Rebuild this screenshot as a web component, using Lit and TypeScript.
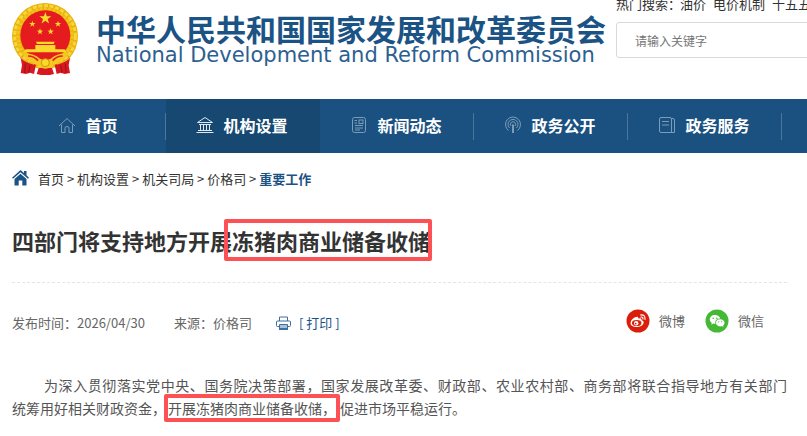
import { LitElement, html, css, svg } from "lit";
import { customElement } from "lit/decorators.js";

const STAR = "M0 -10 L2.3 -3.2 L9.5 -3.1 L3.7 1.2 L5.9 8.1 L0 3.9 L-5.9 8.1 L-3.7 1.2 L-9.5 -3.1 L-2.3 -3.2Z";

const NAV = [
  {
    label: "首页",
    icon: svg`<path d="M1 10 L9 2.5 L17 10 M3.5 8.5 V16.5 H7 V12 Q7 10.5 9 10.5 Q11 10.5 11 12 V16.5 H14.5 V8.5"/>`,
  },
  {
    label: "机构设置",
    active: true,
    icon: svg`<path d="M1.5 6.5 L9 1.5 L16.5 6.5Z M3 8.5 H15 M4.5 8.5 V14 M7.5 8.5 V14 M10.5 8.5 V14 M13.5 8.5 V14 M2 14.5 H16 M0.5 16.5 H17.5"/>`,
  },
  {
    label: "新闻动态",
    icon: svg`<rect x="2.5" y="1.5" width="13" height="15" rx="2"/><path d="M4.5 4.5 H7 M4.5 7 H7 M5 9.5 H13 M5 12 H13 M5 14 H10"/><rect x="9" y="4" width="4" height="3.5"/>`,
  },
  {
    label: "政务公开",
    icon: svg`<path d="M4.5 14.5 A7.5 7.5 0 1 1 13.5 14.5 M5.5 12 A5 5 0 1 1 12.5 12 M7 10 A2.6 2.6 0 1 1 11 10"/><path d="M9 8.5 V17" stroke-width="2"/>`,
  },
  {
    label: "政务服务",
    icon: svg`<path d="M3 1.5 H12 Q13.5 1.5 13.5 3 V16.5 H3 Q1.5 16.5 1.5 15 V3 Q1.5 1.5 3 1.5Z M4 5.5 H11 M4 9 H11 M13.5 2.5 H15 Q16.5 2.5 16.5 4 V16.5 H13"/>`,
  },
];

@customElement("site-emblem")
class SiteEmblem extends LitElement {
  static styles = css`
    :host { display: block; flex: none; }
    .emblem { display: block; width: 66px; height: 72px; }
  `;
  render() {
    return html`<svg class="emblem" viewBox="12 9 198 216" role="img" aria-label="国徽">
      <circle cx="111" cy="108" r="99" fill="#e9b10c"/>
      <circle cx="111" cy="108" r="91" fill="none" stroke="#f7d63a" stroke-width="9" stroke-dasharray="12 5"/>
      <circle cx="111" cy="108" r="81" fill="none" stroke="#f3c51c" stroke-width="9" stroke-dasharray="9 4"/>
      <circle cx="112" cy="106" r="75" fill="#e51b1f"/>
      <g fill="#fbd92b">
        <path d=${STAR} transform="translate(112 55) scale(1.9)"/>
        <path d=${STAR} transform="translate(73 72) scale(1)"/>
        <path d=${STAR} transform="translate(150 72) scale(1)"/>
        <path d=${STAR} transform="translate(96 95) scale(1)"/>
        <path d=${STAR} transform="translate(128 95) scale(1)"/>
        <path d="M84 125 H140 L137 132 H87Z M82 135 H142 V148 H170 L176 157 H47 L53 148 H82Z"/>
      </g>
      <path d="M37 168 Q50 186 84 194 L78 222 L66 218 L54 222 L38 219 L42 196Z M187 168 Q173 186 140 194 L146 222 L158 218 L170 222 L186 219 L182 196Z" fill="#d7181f"/>
      <path d="M92 204 H132 L138 222 Q112 230 86 222Z" fill="#d7181f"/>
      <path d="M52 190 L50 219 M66 196 L62 218 M172 190 L174 219 M158 196 L162 218" stroke="#9d1018" stroke-width="3" fill="none"/>
      <path d="M45 160 Q78 160 96 176 Q112 184 128 176 Q146 160 179 160 Q172 188 140 190 Q128 206 112 206 Q96 206 84 190 Q52 188 45 160Z" fill="#f5c722"/>
      <path d="M60 168 Q78 168 90 182 M164 168 Q146 168 134 182" stroke="#e51b1f" stroke-width="5" fill="none"/>
      <circle cx="112" cy="188" r="12" fill="#fbd92b" stroke="#cf9208" stroke-width="3"/>
      <path d="M37 168 Q44 184 78 192 M187 168 Q180 184 146 192" stroke="#efb81a" stroke-width="4" fill="none"/>
    </svg>`;
  }
}

@customElement("site-header")
class SiteHeader extends LitElement {
  static styles = css`
    :host { display: block; overflow: hidden; }
    .bar { display: flex; height: 99px; padding-left: 12px; align-items: flex-start; }
    .emblem { margin-top: 3px; }
    .brand { margin: 12px 10px 0 18px; flex: none; color: #1b5385; }
    .cn { font-size: 30px; line-height: 32px; font-weight: 700; margin: 0; white-space: nowrap; }
    .en { font-family: "DejaVu Sans", sans-serif; font-size: 21px; line-height: 22px; margin: 0; white-space: nowrap; color: #2c6090; }
    .search { flex: 1 0 200px; margin-top: -6px; margin-right: -8px; }
    .hot { display: flex; gap: 7px; line-height: 20px; font-size: 13px; color: #333; white-space: nowrap; margin-bottom: 8px; }
    .hot a { color: inherit; text-decoration: none; }
    .lead { margin-right: -8px; }
    .box {
      display: block; width: 100%; height: 36px; box-sizing: border-box; padding: 0 18px;
      border: 1px solid #d9d9d9; border-radius: 3px; background: #fff;
      font-family: inherit; font-size: 12px; color: #333; outline: none;
    }
    .box::placeholder { color: #757575; opacity: 1; }
  `;
  render() {
    return html`<header class="bar">
      <site-emblem class="emblem"></site-emblem>
      <div class="brand">
        <p class="cn">中华人民共和国国家发展和改革委员会</p>
        <p class="en">National Development and Reform Commission</p>
      </div>
      <div class="search">
        <div class="hot">
          <span class="lead">热门搜索：</span>
          <a href="#">油价</a><a href="#">电价机制</a><a href="#">十五五</a>
        </div>
        <input class="box" type="text" aria-label="搜索" placeholder="请输入关键字">
      </div>
    </header>`;
  }
}

@customElement("site-nav")
class SiteNav extends LitElement {
  static styles = css`
    :host { display: block; overflow: hidden; background: #1b5180; }
    .nav { display: flex; padding-left: 12px; }
    .item {
      position: relative; flex: none; width: 154px; height: 54px; box-sizing: border-box; padding: 0 2px 2px 0;
      display: flex; align-items: center; justify-content: center; gap: 9px;
      color: #fff; text-decoration: none; font-size: 16px; font-weight: 700;
    }
    .item::after { content: ""; position: absolute; right: 0; top: 14px; height: 27px; width: 1px; background: #4b779c; }
    .active { background: #164872; }
    .active::after { display: none; }
    .icon { width: 18px; height: 18px; fill: none; stroke: #7d9cb7; stroke-width: 1; }
    .active .icon { stroke: #dfe8f0; }
  `;
  render() {
    return html`<nav class="nav">
      ${NAV.map(
        (n) => html`<a class="item ${n.active ? "active" : ""}" href="#">
          <svg class="icon" viewBox="0 0 18 18" aria-hidden="true">${n.icon}</svg><span>${n.label}</span>
        </a>`
      )}
    </nav>`;
  }
}

@customElement("app-root")
class AppRoot extends LitElement {
  static styles = css`
    :host {
      display: block; min-height: 100vh; overflow: hidden; background: #fff; color: #333;
      font-family: "Noto Sans CJK SC", sans-serif;
    }
    a { color: inherit; text-decoration: none; }
    .content { padding: 0 20px 0 12px; }
    .crumbs { display: flex; align-items: center; height: 50px; font-size: 13px; white-space: pre; }
    .home { width: 17px; height: 16px; margin-right: 9px; fill: #1b5385; }
    .current { color: #1b5385; font-weight: 700; }
    .title { margin: 21px 0 25px; font-size: 22px; line-height: 33px; font-weight: 700; }
    .mark { position: relative; }
    .mark::after { content: ""; position: absolute; inset: -5px -2px -5px -8px; border: 4px solid #fd5155; border-radius: 2px; }
    .meta {
      display: flex; align-items: center; border-top: 1px dashed #e5e5e5;
      padding-top: 20px; font-size: 13px; line-height: 40px; color: #666;
    }
    .source { margin-left: 29px; }
    .print {
      display: flex; align-items: center; gap: 8px; margin-left: 24px; padding: 0; border: 0; background: none;
      font: inherit; color: #1b5385; cursor: pointer;
    }
    .printer { width: 15px; height: 14px; fill: none; stroke: #3f6f9b; stroke-width: 1; }
    .share { display: flex; gap: 20px; margin: -4px 23px 0 auto; }
    .share a { display: flex; align-items: center; gap: 9px; }
    .badge { width: 24px; height: 24px; }
    .text { margin: 31px 0 0; font-size: 14px; line-height: 23px; color: #555; }
    .first { display: block; text-indent: 32px; text-align: justify; text-align-last: justify; }
    .key { margin-left: -2px; border: 4px solid #fd5155; border-radius: 2px; }
  `;
  render() {
    return html`
      <site-header></site-header>
      <site-nav></site-nav>
      <main class="content">
        <nav class="crumbs" aria-label="当前位置"><svg class="home" viewBox="0 0 17 16" aria-hidden="true"><path d="M8.5 0 L12 3 V1 H14.5 V5.3 L17 7.7 L16 8.8 L8.5 2.2 L1 8.8 L0 7.7Z"/><path d="M8.5 3.8 L14.5 9 V15.5 H10.3 V10.5 H6.7 V15.5 H2.5 V9Z"/></svg><a href="#">首页</a> &gt; <a href="#">机构设置</a> &gt; <a href="#">机关司局</a> &gt; <a href="#">价格司</a> &gt; <a class="current" href="#">重要工作</a></nav>
        <article>
          <h1 class="title">四部门将支持地方开展<span class="mark">冻猪肉商业储备收储</span></h1>
          <div class="meta">
            <span>发布时间：2026/04/30</span>
            <span class="source">来源：价格司</span>
            <button class="print" type="button">
              <svg class="printer" viewBox="0 0 15 14" aria-hidden="true"><path d="M3.5 5 V1 H11.5 V5 M3 10.5 H1.5 Q.5 10.5 .5 9.5 V6 Q.5 5 1.5 5 H13.5 Q14.5 5 14.5 6 V9.5 Q14.5 10.5 13.5 10.5 H12"/><path d="M3.5 8.5 H11.5 V13 H3.5Z" fill="#a9c2d8"/><path d="M3 13 H12" stroke-width="2"/></svg>
              <span>[ 打印 ]</span>
            </button>
            <div class="share">
              <a href="#"><svg class="badge" viewBox="0 0 24 24" aria-hidden="true"><circle cx="12" cy="12" r="11.5" fill="#da1e0b"/><path d="M10.5 8 Q12.5 7 12.3 9.6 Q16 8.5 15.6 11.2 Q18.3 12 17.5 14.2 Q16 18 10.6 18 Q5 17.8 4.5 14.5 Q4.6 11 8 8.8 Q9.5 7.7 10.5 8Z" fill="#fff"/><ellipse cx="10.7" cy="14" rx="4.8" ry="3.1" fill="#da1e0b"/><circle cx="10.2" cy="14.2" r="2.2" fill="#fff"/><circle cx="9.7" cy="14.6" r=".9" fill="#da1e0b"/><path d="M14.5 6 Q19.3 5.2 19 10.4 M15 8.1 Q17 7.8 17 10" fill="none" stroke="#fff" stroke-width="1.1" stroke-linecap="round"/></svg><span>微博</span></a>
              <a href="#"><svg class="badge" viewBox="0 0 24 24" aria-hidden="true"><circle cx="12" cy="12" r="11.5" fill="#45b935"/><path d="M10 6 C6.8 6 4.8 8 4.8 10.4 C4.8 12 5.6 13.1 6.8 13.9 L6.3 15.7 L8.4 14.6 L10.4 14.9 C9.6 11.6 12 9.5 15.2 9.5 C14.7 7.4 12.6 6 10 6Z" fill="#fff"/><path d="M15.2 10.2 C12.6 10.2 10.9 11.8 10.9 13.8 C10.9 15.9 12.8 17.4 15.2 17.4 L16.7 17.1 L18.4 18 L18 16.5 C19 15.8 19.5 14.9 19.5 13.8 C19.5 11.8 17.6 10.2 15.2 10.2Z" fill="#fff"/><g fill="#45b935"><circle cx="8.2" cy="9.2" r=".8"/><circle cx="11.8" cy="9.2" r=".8"/><circle cx="13.8" cy="12.8" r=".6"/><circle cx="16.6" cy="12.8" r=".6"/></g></svg><span>微信</span></a>
            </div>
          </div>
          <p class="text"><span class="first">为深入贯彻落实党中央、国务院决策部署，国家发展改革委、财政部、农业农村部、商务部将联合指导地方有关部门</span>统筹用好相关财政资金，<span class="key">开展冻猪肉商业储备收储，</span>促进市场平稳运行。</p>
        </article>
      </main>
    `;
  }
}
